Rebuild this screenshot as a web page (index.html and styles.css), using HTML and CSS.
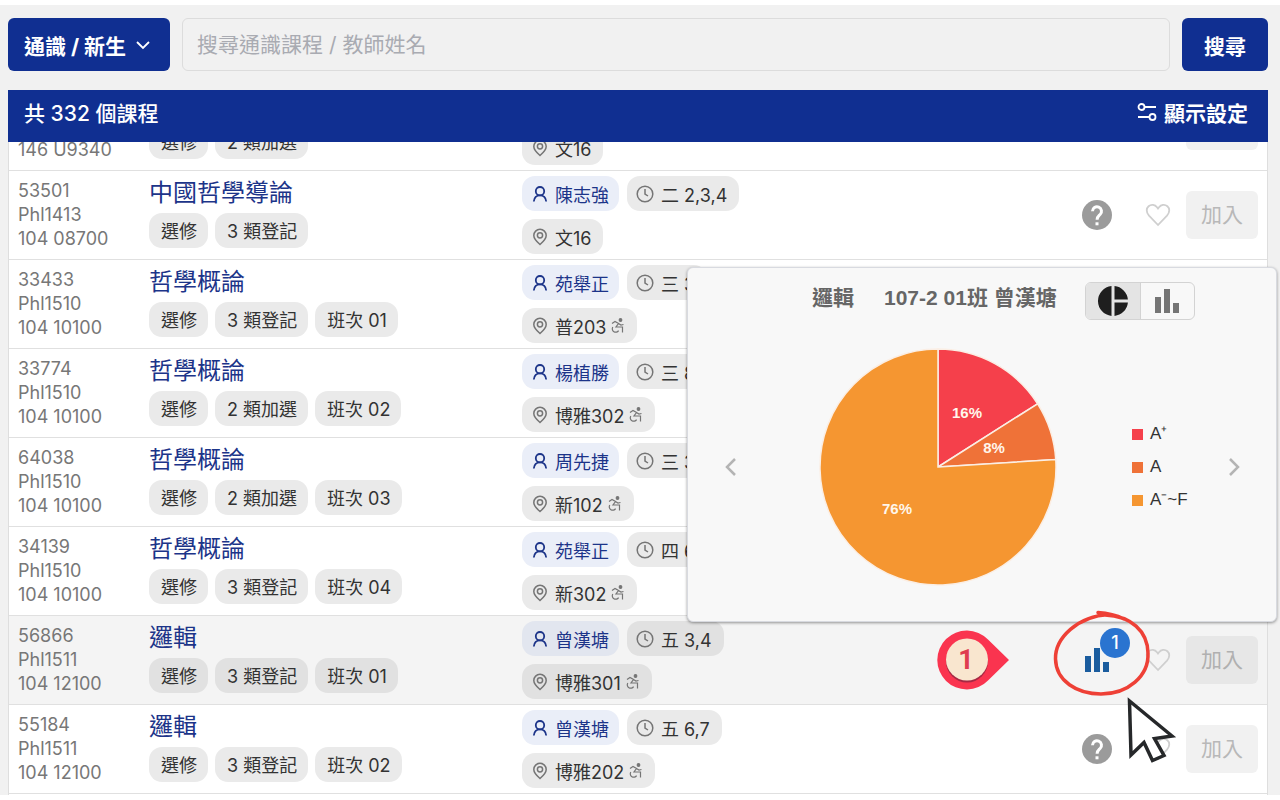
FILE: index.html
```html
<!DOCTYPE html>
<html lang="zh-Hant">
<head>
<meta charset="utf-8">
<title>通識課程</title>
<link rel="stylesheet" href="styles.css">
</head>
<body>
<svg class="sprite" aria-hidden="true">
  <symbol id="user" viewBox="0 0 16 18"><circle cx="8" cy="6.200" r="4.200"/><path d="M1.800 16.500c.4-3.600 2.700-6.100 6.200-6.100s5.800 2.500 6.200 6.100"/></symbol>
  <symbol id="clock" viewBox="0 0 18 18"><circle cx="9" cy="9" r="7.800"/><path d="M9 4v5l3 2"/></symbol>
  <symbol id="pin" viewBox="0 0 16 18"><path d="M8 16.500C4.500 13.500 1.800 10.800 1.800 7.500a6.200 6.200 0 0 1 12.400 0c0 3.300-2.700 6-6.200 9z"/><circle cx="8" cy="7.300" r="2.600"/></symbol>
  <symbol id="wheelchair" viewBox="0 0 15 16"><circle cx="10.500" cy="2" r="1.300" fill="currentColor"/><path d="M2 5.500L5 3.500l3.500 2L6 9h6.500v5.500M2.800 9a3.400 3.400 0 1 0 5.800 3.600M8.500 5.500L11 7l2.500-.5"/></symbol>
  <symbol id="heart" viewBox="0 0 26 24"><path d="M13 22L4 12.600C.8 9 1.300 5.200 3.600 3.200 6.300.9 10 1.600 12 4.200l1 1.300 1-1.300c2-2.600 5.700-3.300 8.400-1 2.300 2 2.800 5.800-.4 9.400z"/></symbol>
  <symbol id="help" viewBox="0 0 30 30"><circle cx="15" cy="15" r="15" fill="#9b9b9b"/><path d="M10.500 11.300a4.500 4.500 0 1 1 7.600 3.200c-1.800 1.700-3 2.300-3 5.200" fill="none" stroke="#fff" stroke-width="3"/><path d="M13.500 22.300h3v3h-3z" fill="#fff"/></symbol>
</svg>
<main class="page">
  <form class="search">
    <button class="btn category" type="button">通識 / 新生
      <svg class="chevron" viewBox="0 0 16 10"><path d="M2 2l6 6 6-6"/></svg>
    </button>
    <input class="query" type="search" aria-label="搜尋課程" placeholder="搜尋通識課程 / 教師姓名">
    <button class="btn submit" type="submit">搜尋</button>
  </form>
  <header class="bar">
    <h1 class="count">共 332 個課程</h1>
    <button class="settings" type="button">
      <svg class="sliders" viewBox="0 0 20 20"><circle cx="4.500" cy="5" r="3"/><path d="M7.500 5H19M1 15h11"/><circle cx="15.500" cy="15" r="3"/></svg>
      顯示設定
    </button>
  </header>
  <section class="results">
    <div class="scroll">
      <table class="courses">
        <colgroup><col class="col-code"><col class="col-name"><col class="col-info"><col class="col-actions"></colgroup>
        <tbody>
        <tr class="leaving">
          <td class="code">146 U9340</td>
          <td class="title"><div class="chips"><span class="chip">選修</span><span class="chip">2 類加選</span></div></td>
          <td><div class="info"><div class="chips"><span class="chip place"><svg><use href="#pin"/></svg>文16</span></div></div></td>
          <td><div class="actions"><button class="add" aria-label="加入"></button></div></td>
        </tr>
        <tr>
          <td class="code">53501<br>Phl1413<br>104 08700</td>
          <td class="title"><a class="name" href="#">中國哲學導論</a><div class="chips"><span class="chip">選修</span><span class="chip">3 類登記</span></div></td>
          <td><div class="info"><div class="chips"><span class="chip person"><svg><use href="#user"/></svg>陳志強</span><span class="chip time"><svg><use href="#clock"/></svg>二 2,3,4</span></div><div class="chips"><span class="chip place"><svg><use href="#pin"/></svg>文16</span></div></div></td>
          <td><div class="actions"><button class="help" aria-label="無資料"><svg><use href="#help"/></svg></button><button class="fav" aria-label="收藏"><svg><use href="#heart"/></svg></button><button class="add">加入</button></div></td>
        </tr>
        <tr>
          <td class="code">33433<br>Phl1510<br>104 10100</td>
          <td class="title"><a class="name" href="#">哲學概論</a><div class="chips"><span class="chip">選修</span><span class="chip">3 類登記</span><span class="chip">班次 01</span></div></td>
          <td><div class="info"><div class="chips"><span class="chip person"><svg><use href="#user"/></svg>苑舉正</span><span class="chip time"><svg><use href="#clock"/></svg>三 3</span></div><div class="chips"><span class="chip place"><svg><use href="#pin"/></svg>普203<svg class="access"><use href="#wheelchair"/></svg></span></div></div></td>
          <td></td>
        </tr>
        <tr>
          <td class="code">33774<br>Phl1510<br>104 10100</td>
          <td class="title"><a class="name" href="#">哲學概論</a><div class="chips"><span class="chip">選修</span><span class="chip">2 類加選</span><span class="chip">班次 02</span></div></td>
          <td><div class="info"><div class="chips"><span class="chip person"><svg><use href="#user"/></svg>楊植勝</span><span class="chip time"><svg><use href="#clock"/></svg>三 8</span></div><div class="chips"><span class="chip place"><svg><use href="#pin"/></svg>博雅302<svg class="access"><use href="#wheelchair"/></svg></span></div></div></td>
          <td></td>
        </tr>
        <tr>
          <td class="code">64038<br>Phl1510<br>104 10100</td>
          <td class="title"><a class="name" href="#">哲學概論</a><div class="chips"><span class="chip">選修</span><span class="chip">2 類加選</span><span class="chip">班次 03</span></div></td>
          <td><div class="info"><div class="chips"><span class="chip person"><svg><use href="#user"/></svg>周先捷</span><span class="chip time"><svg><use href="#clock"/></svg>三 3</span></div><div class="chips"><span class="chip place"><svg><use href="#pin"/></svg>新102<svg class="access"><use href="#wheelchair"/></svg></span></div></div></td>
          <td></td>
        </tr>
        <tr>
          <td class="code">34139<br>Phl1510<br>104 10100</td>
          <td class="title"><a class="name" href="#">哲學概論</a><div class="chips"><span class="chip">選修</span><span class="chip">3 類登記</span><span class="chip">班次 04</span></div></td>
          <td><div class="info"><div class="chips"><span class="chip person"><svg><use href="#user"/></svg>苑舉正</span><span class="chip time"><svg><use href="#clock"/></svg>四 6</span></div><div class="chips"><span class="chip place"><svg><use href="#pin"/></svg>新302<svg class="access"><use href="#wheelchair"/></svg></span></div></div></td>
          <td></td>
        </tr>
        <tr class="active">
          <td class="code">56866<br>Phl1511<br>104 12100</td>
          <td class="title"><a class="name" href="#">邏輯</a><div class="chips"><span class="chip">選修</span><span class="chip">3 類登記</span><span class="chip">班次 01</span></div></td>
          <td><div class="info"><div class="chips"><span class="chip person"><svg><use href="#user"/></svg>曾漢塘</span><span class="chip time"><svg><use href="#clock"/></svg>五 3,4</span></div><div class="chips"><span class="chip place"><svg><use href="#pin"/></svg>博雅301<svg class="access"><use href="#wheelchair"/></svg></span></div></div></td>
          <td><div class="actions"><button class="help grades" aria-label="成績分布"><svg viewBox="0 0 30 30"><path fill="#1a5c9e" d="M3 11h6v16H3zM12 3h6v24h-6zM21 17h6v10h-6z"/></svg><span class="badge">1</span></button><button class="fav" aria-label="收藏"><svg><use href="#heart"/></svg></button><button class="add">加入</button></div></td>
        </tr>
        <tr>
          <td class="code">55184<br>Phl1511<br>104 12100</td>
          <td class="title"><a class="name" href="#">邏輯</a><div class="chips"><span class="chip">選修</span><span class="chip">3 類登記</span><span class="chip">班次 02</span></div></td>
          <td><div class="info"><div class="chips"><span class="chip person"><svg><use href="#user"/></svg>曾漢塘</span><span class="chip time"><svg><use href="#clock"/></svg>五 6,7</span></div><div class="chips"><span class="chip place"><svg><use href="#pin"/></svg>博雅202<svg class="access"><use href="#wheelchair"/></svg></span></div></div></td>
          <td><div class="actions"><button class="help" aria-label="無資料"><svg><use href="#help"/></svg></button><button class="fav" aria-label="收藏"><svg><use href="#heart"/></svg></button><button class="add">加入</button></div></td>
        </tr>
        </tbody>
      </table>
    </div>

    <aside class="popover">
      <div class="pop-head">
        <h2 class="pop-title"><span>邏輯</span><span>107-2 01班 曾漢塘</span></h2>
        <div class="toggle">
          <button class="selected" aria-label="圓餅圖" aria-pressed="true"><svg viewBox="0 0 30 30"><path fill="#1e1e1e" d="M13.500 .075v29.850A15 15 0 0 1 13.500 .075zM16.500 .075A15 15 0 0 1 29.925 13.500H16.500zM16.500 16.500H29.925A15 15 0 0 1 16.500 29.925z"/></svg></button>
          <button aria-label="長條圖" aria-pressed="false"><svg viewBox="0 0 30 30"><path fill="#757575" d="M3 11h6v16H3zM12 3h6v24h-6zM21 17h6v10h-6z"/></svg></button>
        </div>
      </div>
      <div class="pop-body">
        <button class="arrow" aria-label="上一個"><svg viewBox="0 0 12 18"><path d="M10 1L2 9l8 8"/></svg></button>
        <svg class="pie" viewBox="0 0 236 236" role="img" aria-label="成績分布圓餅圖">
          <g stroke="#fbeee4" stroke-width="1.500">
            <path fill="#f5404b" d="M118 118V0A118 118 0 0 1 217.630 54.770z"/>
            <path fill="#ef7238" d="M118 118L217.630 54.770A118 118 0 0 1 235.770 110.590z"/>
            <path fill="#f59631" d="M118 118L235.770 110.590A118 118 0 1 1 118 0z"/>
          </g>
          <g class="pct"><text x="147" y="69">16%</text><text x="174" y="104">8%</text><text x="77" y="165">76%</text></g>
        </svg>
        <ul class="legend">
          <li><i class="swatch red"></i><span>A⁺</span></li>
          <li><i class="swatch coral"></i><span>A</span></li>
          <li><i class="swatch orange"></i><span>A⁻~F</span></li>
        </ul>
        <button class="arrow" aria-label="下一個"><svg viewBox="0 0 12 18"><path d="M2 1l8 8-8 8"/></svg></button>
      </div>
    </aside>

    <svg class="guide" viewBox="930 605 250 170" aria-hidden="true">
      <path fill="#fa344f" d="M988 639.500L1009 660l-21 20.500A29.500 29.500 0 1 1 988 639.500z"/>
      <circle cx="967" cy="661.500" r="21" fill="#a62944"/>
      <circle cx="967" cy="659.500" r="21" fill="#f9e6cf"/>
      <text class="step" x="966" y="669">1</text>
      <path d="M1098 612.500C1106 613 1116 615 1124 619M1109 614.500C1078 616 1055 638 1055.500 659C1056 681 1077 694 1101 694C1128 694 1149 676 1148 653C1147.500 631 1131 616 1105 615" fill="none" stroke="#ee4036" stroke-width="3.500" stroke-linecap="round"/>
      <path d="M1129.500 701L1131 755L1144 742.500L1152.500 760.500L1164 755.500L1154.500 738.500L1172 736z" fill="#fff" stroke="#26282a" stroke-width="3.500"/>
    </svg>
  </section>
</main>
</body>
</html>
```
FILE: styles.css
```css
* { box-sizing: border-box; }

body {
  margin: 0;
  height: 100vh;
  padding: 5px 0;
  background: #fff;
  color: #333;
  font-family: Inter, "Noto Sans CJK TC", sans-serif;
}

button {
  border: 0;
  padding: 0;
  background: none;
  color: inherit;
  font: inherit;
  cursor: pointer;
}

.sprite { display: none; }

.page {
  display: flex;
  flex-direction: column;
  height: 100%;
  padding: 13px 12px 0 8px;
  background: #f1f1f1;
}

/* Search form */
.search {
  display: flex;
  gap: 12px;
  margin-bottom: 19px;
}

.btn {
  height: 53px;
  border-radius: 6px;
  background: #102f91;
  color: #fff;
  font-size: 21px;
  font-weight: 700;
}

.category {
  display: flex;
  align-items: center;
  gap: 9px;
  padding: 0 19px 0 16px;
}

.chevron {
  width: 16px;
  fill: none;
  stroke: #fff;
  stroke-width: 1.8;
}

.submit { padding: 0 22px; }

.query {
  flex: 1;
  min-width: 0;
  height: 53px;
  padding: 0 14px;
  border: 1px solid #dcdcdc;
  border-radius: 6px;
  background: #f1f1f1;
  font: inherit;
  font-size: 21px;
}

.query::placeholder { color: #a9abb2; }

/* Header bar */
.bar {
  display: flex;
  flex: none;
  align-items: center;
  justify-content: space-between;
  height: 52px;
  padding: 0 20px 8px 16px;
  background: #102f91;
  color: #fff;
  font-size: 21px;
}

.count {
  margin: 0;
  font-size: 21px;
  font-weight: 500;
}

.settings {
  display: flex;
  align-items: center;
  gap: 7px;
  font-weight: 700;
}

.sliders {
  width: 20px;
  height: 20px;
  fill: none;
  stroke: #fff;
  stroke-width: 1.8;
}

/* Course table */
.results {
  position: relative;
  flex: 1;
  min-height: 0;
}

.scroll {
  display: flex;
  flex-direction: column;
  justify-content: flex-end;
  height: 100%;
  overflow: hidden;
  padding-bottom: 1px;
  border: solid #dedede;
  border-width: 0 1px;
  background: #fff;
}

.courses {
  flex: none;
  width: 100%;
  table-layout: fixed;
  border-collapse: separate;
  border-spacing: 0;
}

.col-code { width: 140px; }
.col-name { width: 373px; }
.col-actions { width: 200px; }

td {
  height: 89px;
  padding: 0;
  border-bottom: 1px solid #e0e0e0;
  vertical-align: middle;
}

.active { background: #f4f4f4; }

.code {
  padding-left: 9px;
  color: #777;
  font-size: 18px;
  line-height: 24px;
}

.title {
  padding-top: 6px;
  vertical-align: top;
}

.name {
  display: block;
  margin-bottom: 4px;
  color: #1c3489;
  font-size: 24px;
  line-height: 32px;
  text-decoration: none;
}

/* Row partly scrolled under the header bar */
.leaving td {
  padding-bottom: 5px;
  vertical-align: bottom;
}

.leaving .code { padding-bottom: 8px; }
.leaving .title { padding-bottom: 11px; }
.leaving .actions { padding-bottom: 15px; }

.chips {
  display: flex;
  gap: 7px;
}

.chip {
  display: flex;
  align-items: center;
  height: 35px;
  padding: 0 12px;
  border-radius: 13px;
  background: #eaeaea;
  color: #333;
  font-size: 18px;
  white-space: nowrap;
}

.title .chip { padding: 0 11px 1px 12px; }

.active .chip { background: #e1e1e1; }

.chip svg {
  width: 16px;
  height: 18px;
  margin-right: 7px;
  fill: none;
  stroke: #757575;
  stroke-width: 1.5;
}

.info {
  display: grid;
  gap: 8px;
}

.info .chips { gap: 8px; }

.info .person {
  padding: 0 10px;
  background: #eaeef8;
  color: #1c3489;
}

.active .info .person { background: #e2e6ef; }

.info .person svg {
  stroke: #1c3489;
  stroke-width: 1.8;
}

.time { padding-left: 9px; }
.place { padding-left: 10px; }
.time svg { width: 18px; }

.chip svg.access {
  width: 15px;
  height: 16px;
  margin: 0 0 0 4px;
  stroke-width: 1.2;
  color: #757575;
}

/* Row actions */
.actions {
  display: flex;
  align-items: center;
  justify-content: flex-end;
  padding-right: 9px;
}

.help {
  position: relative;
  width: 30px;
  height: 30px;
  margin-right: 33px;
}

.help svg {
  display: block;
  width: 30px;
  height: 30px;
}

.badge {
  position: absolute;
  top: -17px;
  right: -18px;
  width: 30px;
  height: 30px;
  border-radius: 50%;
  background: #2a74d0;
  color: #fff;
  font-size: 18px;
  font-weight: 500;
  line-height: 30px;
}

.fav {
  width: 26px;
  height: 24px;
  margin-right: 15px;
}

.fav svg {
  display: block;
  width: 26px;
  height: 24px;
  fill: none;
  stroke: #cfcfcf;
  stroke-width: 1.8;
}

.add {
  width: 72px;
  height: 48px;
  padding-bottom: 4px;
  border-radius: 6px;
  background: #f1f1f1;
  color: #b8b8b8;
  font-size: 21px;
}

.active .add {
  background: #e7e7e7;
  color: #b0b0b0;
}

/* Grade popover */
.popover {
  position: absolute;
  top: 125px;
  right: -9px;
  width: 590px;
  padding: 14px 34px 36px 35px;
  border: 1px solid #d8dae0;
  border-radius: 6px;
  background: #f8f8f8;
  box-shadow: 0 1px 3px rgba(0, 0, 0, .4);
  font-family: "Liberation Sans", "Noto Sans CJK TC", sans-serif;
}

.pop-head {
  display: flex;
  align-items: center;
  justify-content: space-between;
  margin-bottom: 29px;
  padding: 0 47px 0 89px;
}

.pop-title {
  display: flex;
  gap: 30px;
  margin: 0;
  padding-bottom: 6px;
  color: #666;
  font-size: 21px;
  line-height: 28px;
}

.toggle {
  display: flex;
  flex: none;
  width: 110px;
  height: 38px;
  overflow: hidden;
  border: 1px solid #d3d3d3;
  border-radius: 6px;
}

.toggle button {
  display: flex;
  flex: 1;
  align-items: center;
  justify-content: center;
}

.toggle .selected {
  border-right: 1px solid #d3d3d3;
  background: #e4e4e4;
}

.toggle svg {
  width: 30px;
  height: 30px;
}

.pop-body {
  display: flex;
  align-items: center;
}

.arrow {
  width: 16px;
  height: 30px;
}

.arrow svg {
  display: block;
  width: 12px;
  height: 18px;
  margin: auto;
  fill: none;
  stroke: #b4b4b4;
  stroke-width: 2.5;
}

.pie {
  width: 236px;
  height: 236px;
  margin-left: 81px;
  overflow: visible;
}

.pct {
  fill: #fff6ec;
  font-size: 15px;
  font-weight: 700;
  text-anchor: middle;
}

.legend {
  display: grid;
  flex: 1;
  gap: 9px;
  margin: 0 0 0 76px;
  padding: 0;
  color: #333;
  font-size: 17px;
  line-height: 24px;
  list-style: none;
}

.legend li {
  display: flex;
  align-items: center;
  gap: 7px;
}

.swatch {
  width: 11px;
  height: 11px;
}

.red { background: #f5404b; }
.coral { background: #ef7238; }
.orange { background: #f59631; }

/* Tutorial marks over the list */
.guide {
  position: absolute;
  top: 463px;
  right: 88px;
  width: 250px;
  height: 170px;
  pointer-events: none;
}

.step {
  fill: #df3d50;
  font-family: Roboto, sans-serif;
  font-size: 27px;
  font-weight: 700;
  text-anchor: middle;
}
```
